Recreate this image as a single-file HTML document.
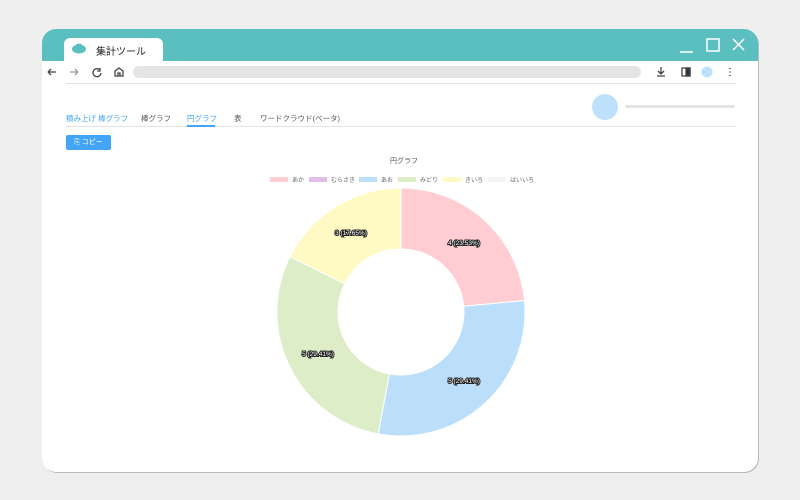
<!DOCTYPE html><html><head><meta charset="utf-8"><style>
body{margin:0;width:800px;height:500px;background:#efefef;position:relative;overflow:hidden;font-family:"Liberation Sans","Noto Sans CJK JP",sans-serif}
.win{position:absolute;left:42px;top:29px;width:716px;height:443px;background:#fff;border-radius:14px;overflow:hidden;box-shadow:1px 1px 0 #bbb}
.bar{position:absolute;left:0;top:0;width:716px;height:32px;background:#5bbfc0}
.tab{position:absolute;left:22px;top:9px;width:99px;height:24px;background:#fff;border-radius:6px 6px 0 0;font-size:10px}
.abs{position:absolute}
.t{position:absolute;font-size:7.5px;color:#555;white-space:nowrap}
</style></head><body>
<div class="win">
<div class="bar"></div>
<div class="tab"><svg class="abs" style="left:7px;top:4px" width="16" height="12"><ellipse cx="8" cy="7" rx="7" ry="4.5" fill="#5bbfc0"/><ellipse cx="8" cy="5" rx="4" ry="3.5" fill="#5bbfc0"/></svg><span class="abs" style="left:32px;top:5px;color:#222">集計ツール</span></div>
<svg class="abs" style="left:636px;top:8px" width="80" height="18" stroke="#fff" stroke-width="1.5" fill="none"><path d="M2 15H15"/><rect x="29" y="2" width="12" height="12"/><path d="M55 2L66 13M66 2L55 13"/></svg>
<svg class="abs" style="left:0;top:32px" width="716" height="24" fill="none" stroke="#444" stroke-width="1.3"><path d="M6 11H14M6 11L9 8M6 11L9 14"/><path d="M28 11H36M36 11L33 8M36 11L33 14" stroke="#999"/><path d="M58 9A4 4 0 1 0 59 12M58 7V10H55"/><path d="M73 15V10L77 7L81 10V15ZM76 15V12H78V15"/><rect x="91" y="5" width="508" height="12" rx="6" fill="#e4e4e4" stroke="none"/><path d="M619 6V13M616 10L619 13L622 10M615 15H623"/><rect x="640" y="7" width="8" height="8" fill="#fff"/><rect x="644" y="7" width="4" height="8" fill="#333"/><circle cx="665" cy="11" r="5.5" fill="#bde0fb" stroke="none"/><path d="M688 7V8M688 10.5V11.5M688 14V15" stroke-width="1.5"/></svg>
<div class="abs" style="left:24px;top:54px;width:670px;height:1px;background:#e3e3e3"></div>
<div class="abs" style="left:550px;top:65px;width:26px;height:26px;border-radius:50%;background:#bde0fb"></div>
<div class="abs" style="left:583px;top:76px;width:110px;height:3px;border-radius:2px;background:#e3e3e3"></div>
<div class="t" style="left:24px;top:84px;color:#42a5f5">積み上げ 棒グラフ</div>
<div class="t" style="left:99px;top:84px">棒グラフ</div>
<div class="t" style="left:145px;top:84px;color:#42a5f5">円グラフ</div>
<div class="t" style="left:192px;top:84px">表</div>
<div class="t" style="left:218px;top:84px">ワードクラウド(ベータ)</div>
<div class="abs" style="left:24px;top:97px;width:670px;height:1px;background:#e3e3e3"></div>
<div class="abs" style="left:145px;top:96px;width:28px;height:2px;background:#42a5f5"></div>
<div class="abs" style="left:24px;top:106px;width:45px;height:15px;background:#42a5f5;border-radius:2px;color:#fff;font-size:7px;line-height:15px;text-align:center">⎘ コピー</div>
<div class="t" style="left:348px;top:127px;font-size:7px">円グラフ</div>
</div>
<svg class="abs" style="left:0;top:0" width="800" height="500">
<g font-size="6" fill="#666"><rect x="270" y="177" width="18" height="5" fill="#ffcdd2"/><text x="292" y="182">あか</text><rect x="309" y="177" width="18" height="5" fill="#e1bee7"/><text x="331" y="182">むらさき</text><rect x="359" y="177" width="18" height="5" fill="#bbdefb"/><text x="381" y="182">あお</text><rect x="398" y="177" width="18" height="5" fill="#dcedc8"/><text x="420" y="182">みどり</text><rect x="443" y="177" width="18" height="5" fill="#fff9c4"/><text x="465" y="182">きいろ</text><rect x="488" y="177" width="18" height="5" fill="#f5f5f5"/><text x="510" y="182">はいいろ</text></g>
<g stroke="#fff" stroke-width="1">
<path d="M401 188A124 124 0 0 1 524.5 300.6L463.7 306.2A63 63 0 0 0 401 249Z" fill="#ffcdd2"/>
<path d="M524.5 300.6A124 124 0 0 1 378.2 433.9L389.4 373.9A63 63 0 0 0 463.7 306.2Z" fill="#bbdefb"/>
<path d="M378.2 433.9A124 124 0 0 1 290 256.7L344.6 283.9A63 63 0 0 0 389.4 373.9Z" fill="#dcedc8"/>
<path d="M290 256.7A124 124 0 0 1 401 188L401 249A63 63 0 0 0 344.6 283.9Z" fill="#fff9c4"/>
</g>
<g font-size="6.5" fill="#fff" stroke="#222" stroke-width="2" paint-order="stroke" text-anchor="middle">
<text x="464" y="245">4 (23.53%)</text><text x="464" y="383">5 (29.41%)</text><text x="318" y="356">5 (29.41%)</text><text x="351" y="235">3 (17.65%)</text></g>
</svg>
</body></html>
